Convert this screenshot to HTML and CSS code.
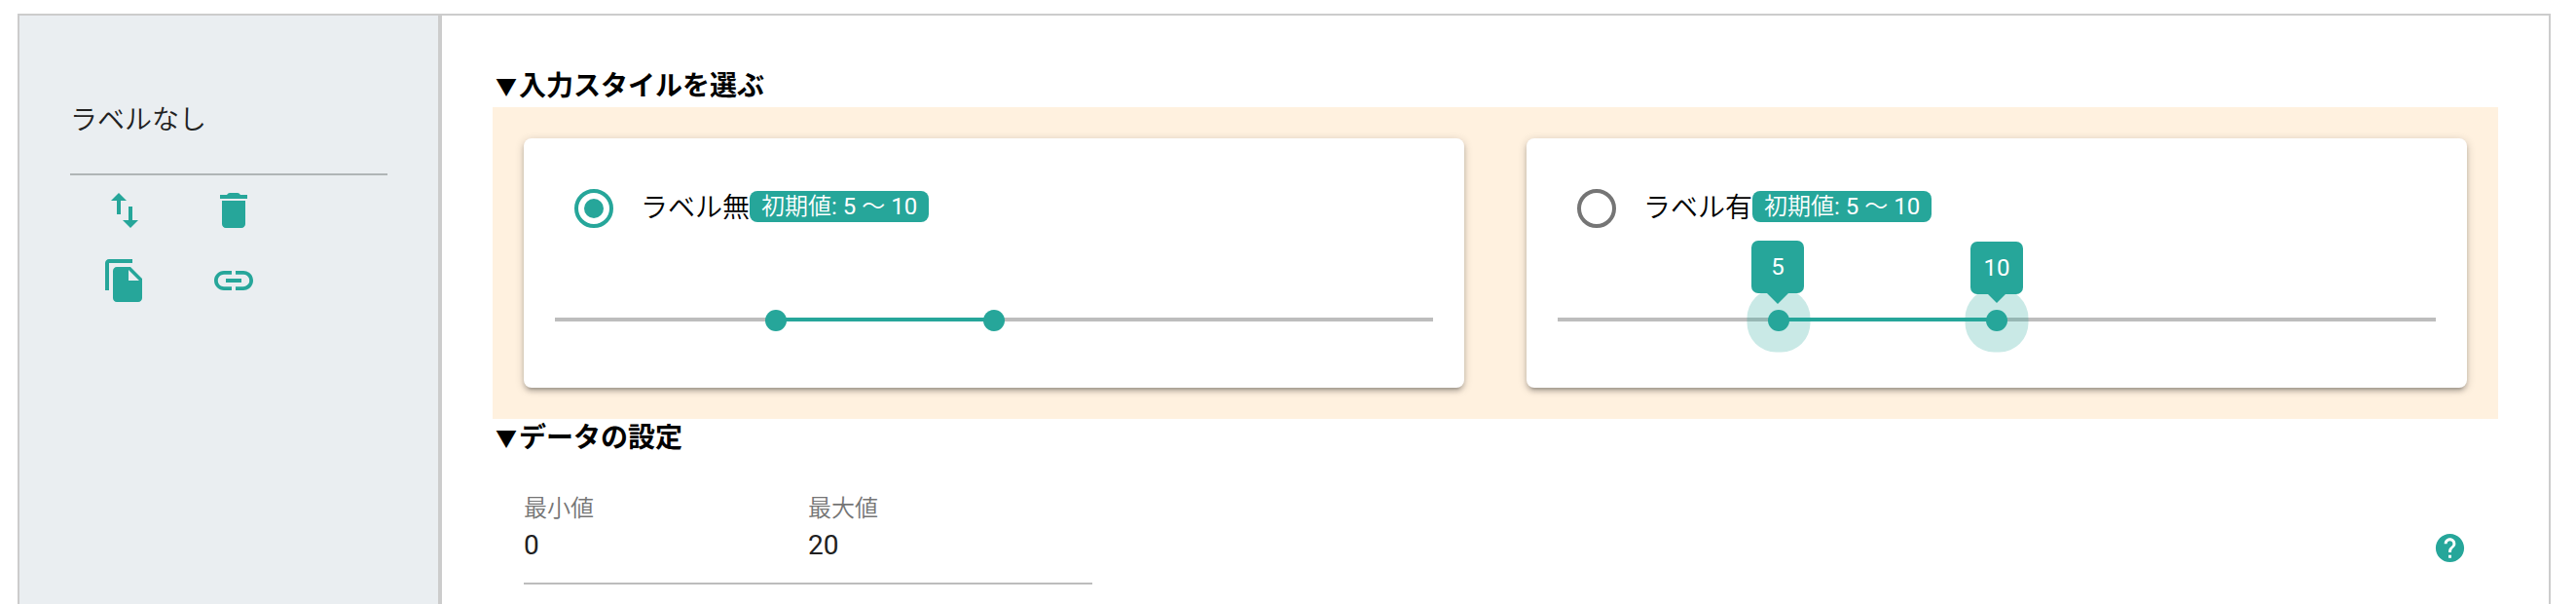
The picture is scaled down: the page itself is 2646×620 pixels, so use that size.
FILE: index.html
```html
<!DOCTYPE html>
<html lang="ja">
<head>
<meta charset="utf-8">
<title>ラベルなし</title>
<link rel="stylesheet" href="styles.css">
</head>
<body>
<div class="frame">
  <aside class="sidebar">
    <div class="name">ラベルなし</div>
    <div class="tools">
      <svg viewBox="0 0 24 24"><path d="M9 3L5 6.99h3V14h2V6.99h3L9 3zm7 14.01V10h-2v7.01h-3L15 21l4-3.99h-3z"/></svg>
      <svg viewBox="0 0 24 24"><path d="M6 19c0 1.100.9 2 2 2h8c1.100 0 2-.9 2-2V7H6v12zM19 4h-3.500l-.7-.7q-.3-.3-.8-.3h-4q-.5 0-.8.3L8.500 4H5v2h14V4z"/></svg>
      <svg viewBox="0 0 24 24"><path d="M16 1H4c-1.100 0-2 .9-2 2v14h2V3h12V1zm-1 4l6 6v10c0 1.100-.9 2-2 2H7.990C6.890 23 6 22.100 6 21l.01-14c0-1.100.89-2 1.990-2h7zm-1 7h5.500L14 6.500V12z"/></svg>
      <svg viewBox="0 0 24 24"><path d="M3.900 12c0-1.710 1.390-3.100 3.100-3.100h4V7H7c-2.760 0-5 2.240-5 5s2.240 5 5 5h4v-1.900H7c-1.710 0-3.100-1.390-3.100-3.100zM8 13h8v-2H8v2zm9-6h-4v1.900h4c1.710 0 3.100 1.390 3.100 3.100s-1.390 3.100-3.100 3.100h-4V17h4c2.760 0 5-2.240 5-5s-2.240-5-5-5z"/></svg>
    </div>
  </aside>
  <main class="main">
    <h2 class="heading"><span class="mark">▼</span>入力スタイルを選ぶ</h2>
    <section class="panel">
      <div class="card">
        <div class="option"><span class="radio on"></span><span class="label">ラベル無</span><span class="badge"><span class="thin">初期値</span>: 5 <span class="thin">～</span> 10</span></div>
        <div class="slider"><span class="range"></span><span class="thumb low"></span><span class="thumb high"></span></div>
      </div>
      <div class="card">
        <div class="option"><span class="radio"></span><span class="label">ラベル有</span><span class="badge"><span class="thin">初期値</span>: 5 <span class="thin">～</span> 10</span></div>
        <div class="slider"><span class="range"></span>
          <span class="thumb low halo"></span><span class="thumb high halo"></span>
          <span class="bubble low">5</span><span class="bubble high small">10</span>
        </div>
      </div>
    </section>
    <h2 class="heading second"><span class="mark">▼</span>データの設定</h2>
    <div class="data">
      <div class="fields">
        <div class="field"><span class="caption">最小値</span><span class="value">0</span></div>
        <div class="field"><span class="caption">最大値</span><span class="value">20</span></div>
      </div>
      <svg class="help" viewBox="0 0 24 24"><path d="M12 2C6.480 2 2 6.480 2 12s4.480 10 10 10 10-4.480 10-10S17.520 2 12 2zm1 17h-2v-2h2v2zm2.070-7.750l-.9.920C13.450 12.900 13 13.500 13 15h-2v-.5c0-1.100.45-2.100 1.170-2.830l1.240-1.260c.37-.36.59-.86.59-1.410 0-1.100-.9-2-2-2s-2 .9-2 2H8c0-2.210 1.790-4 4-4s4 1.790 4 4c0 .88-.36 1.680-.93 2.250z"/></svg>
    </div>
  </main>
</div>
</body>
</html>
```
FILE: styles.css
```css
* { box-sizing: border-box; }
body {
  margin: 0;
  height: 620px;
  padding: 14px 26px 0 18px;
  background: #fff;
  color: #000;
  font-family: Roboto, "Noto Sans CJK JP", sans-serif;
  font-size: 28px;
}
.frame {
  display: flex;
  height: 606px;
  border: 2px solid #ccc;
  border-bottom: 0;
}
.sidebar {
  width: 434px;
  padding: 76px 52px 0;
  background: #eaeef1;
  border-right: 4px solid #ccc;
}
.name {
  height: 88px;
  padding-top: 2px;
  line-height: 60px;
  border-bottom: 2px solid #b0b5b6;
  color: #212121;
  font-weight: 350;
}
.tools {
  display: grid;
  grid-template-columns: 48px 48px;
  gap: 24px 64px;
  padding: 12px 32px;
}
.tools svg { width: 48px; height: 48px; fill: #26a69a; }
.main { flex: 1; padding: 0 52px; }
.heading {
  display: flex;
  height: 44px;
  margin: 50px 0 0;
  padding: 1px 0 0 3px;
  font-size: 28px;
  font-weight: 700;
  line-height: 44px;
}
.heading.second { margin: 0; height: 40px; padding-top: 0; line-height: 40px; }
.mark { width: 24px; margin-top: -2px; font-family: "Noto Sans CJK JP", sans-serif; font-size: 22px; }
.panel {
  display: grid;
  grid-template-columns: 1fr 1fr;
  gap: 64px;
  height: 320px;
  padding: 32px;
  background: #fff1df;
}
.card {
  padding: 48px 32px 0;
  background: #fff;
  border-radius: 8px;
  box-shadow: 0 4px 4px 0 rgba(0,0,0,.14), 0 6px 2px -4px rgba(0,0,0,.12), 0 2px 10px 0 rgba(0,0,0,.2);
}
.option { display: flex; align-items: center; height: 48px; padding-left: 20px; }
.radio {
  display: flex;
  align-items: center;
  justify-content: center;
  width: 40px;
  height: 40px;
  border: 4px solid #757575;
  border-radius: 50%;
}
.radio.on { border-color: #26a69a; }
.radio.on::before {
  content: "";
  width: 20px;
  height: 20px;
  border-radius: 50%;
  background: #26a69a;
}
.label { margin-left: 28px; line-height: 40px; font-weight: 350; white-space: nowrap; }
.badge {
  height: 32px;
  margin-top: -4px;
  padding: 0 12px;
  border-radius: 8px;
  background: #26a69a;
  color: #fff;
  font-size: 24px;
  line-height: 32px;
  white-space: nowrap;
}
.thin { font-weight: 350; }
.slider { position: relative; height: 4px; margin-top: 88px; background: #bdbdbd; }
.low { left: 227px; }
.high { left: 451px; }
.range { position: absolute; left: 227px; width: 224px; height: 4px; background: #26a69a; }
.thumb {
  position: absolute;
  top: -8px;
  width: 22px;
  height: 22px;
  margin-left: -11px;
  border-radius: 50%;
  background: #26a69a;
}
.halo { box-shadow: 0 0 0 21.500px rgba(38,166,154,.25); }
.bubble {
  position: absolute;
  top: -79px;
  width: 54px;
  height: 54px;
  margin-left: -28px;
  border-radius: 7px;
  background: #26a69a;
  color: #fff;
  font-size: 24px;
  line-height: 54px;
  text-align: center;
}
.bubble.small { top: -78px; margin-left: -27px; }
.bubble::after {
  content: "";
  position: absolute;
  top: 54px;
  left: 16px;
  border: 11px solid transparent;
  border-top-color: #26a69a;
  border-bottom: 0;
}
.bubble.small::after { left: 18px; border-width: 9px 9px 0; }
.data { display: flex; justify-content: space-between; padding: 34px 32px 0 32px; }
.fields { display: flex; width: 584px; height: 96px; border-bottom: 2px solid #bdbdbd; }
.field { display: flex; flex-direction: column; width: 292px; }
.caption { height: 36px; color: #757575; font-size: 24px; font-weight: 350; line-height: 36px; }
.value { color: #212121; line-height: 40px; }
.help { width: 35px; height: 35px; margin-top: 41px; fill: #26a69a; }
```
